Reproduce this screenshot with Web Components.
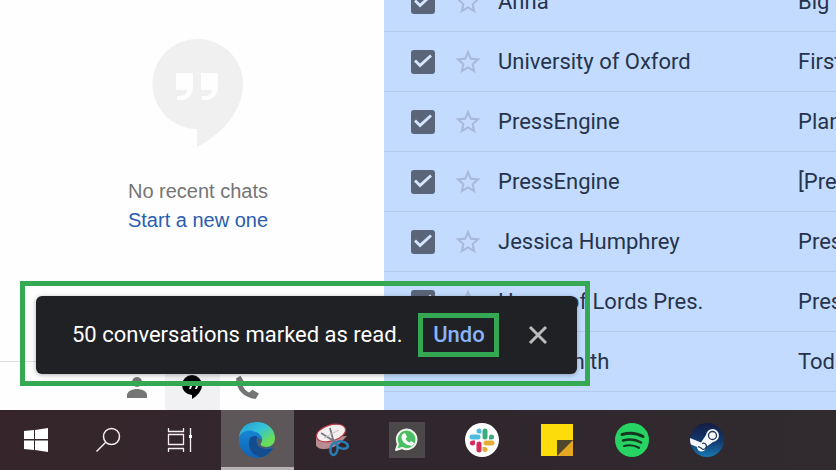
<!DOCTYPE html>
<html lang="en">
<head>
<meta charset="utf-8">
<title>Mail</title>
<style>
    body {
        margin: 0;
        font-family: Roboto, "Liberation Sans", sans-serif;
    }
</style>
</head>
<body>
<desktop-shell>
    <chat-sidebar slot="side"></chat-sidebar>
    <mail-list slot="mail">
        <mail-row sender="Anna">Big n</mail-row>
        <mail-row sender="University of Oxford">First</mail-row>
        <mail-row sender="PressEngine">Plan</mail-row>
        <mail-row sender="PressEngine">[Pres</mail-row>
        <mail-row sender="Jessica Humphrey">Press</mail-row>
        <mail-row sender="House of Lords Pres.">Press</mail-row>
        <mail-row sender="John Smith">Today</mail-row>
    </mail-list>
    <snack-bar slot="toast">50 conversations marked as read.</snack-bar>
    <task-bar slot="taskbar"></task-bar>
</desktop-shell>

<script>
class DesktopShell extends HTMLElement {
    connectedCallback() {
        this.attachShadow({ mode: 'open' });
        this.shadowRoot.innerHTML = `
            <style>
                :host {
                    display: flex;
                    flex-direction: column;
                    height: 100vh;
                    overflow: hidden;
                }
                main {
                    flex: 1;
                    min-height: 0;
                    display: grid;
                    grid-template-columns: 384px 1fr;
                    grid-template-rows: 100%;
                    position: relative;
                    overflow: hidden;
                    background: #fff;
                }
            </style>
            <main>
                <slot name="side"></slot>
                <slot name="mail"></slot>
                <slot name="toast"></slot>
            </main>
            <slot name="taskbar"></slot>
        `;
    }
}

class ChatSidebar extends HTMLElement {
    connectedCallback() {
        this.attachShadow({ mode: 'open' });
        this.shadowRoot.innerHTML = `
            <style>
                :host {
                    display: flex;
                    flex-direction: column;
                    background: #fefefe;
                    font-family: "Liberation Sans", Arial, sans-serif;
                }
                .empty {
                    flex: 1;
                    display: flex;
                    flex-direction: column;
                    align-items: center;
                    padding: 38px 0 0 12px;
                    font-size: 20px;
                    line-height: 29px;
                    color: #757575;
                }
                .empty svg {
                    width: 92px;
                    height: 110px;
                    margin-bottom: 29px;
                }
                p {
                    margin: 0;
                }
                a {
                    color: #2a5db0;
                    text-decoration: none;
                }
                nav {
                    display: flex;
                    justify-content: center;
                    height: 48px;
                    border-top: 1px solid #e0e0e0;
                }
                button {
                    width: 55px;
                    border: 0;
                    padding: 2px 0 0;
                    background: none;
                    color: #757575;
                }
                button.active {
                    background: #f1f1f3;
                    color: #000;
                }
                button svg {
                    display: block;
                    width: 26px;
                    height: 26px;
                    margin: 0 auto;
                }
            </style>
            <div class="empty">
                <svg viewBox="0 0 92 110" fill="#f0f0f0">
                    <path fill-rule="evenodd" d="M46 1a45 45 0 0 1 45 45c0 26-20 50-46 63V91A45 45 0 0 1 46 1zM24 35v17h11c0 4-3 6-10 6v4c10 1 16-4 16-14V35zM49 35v17h11c0 4-3 6-10 6v4c10 1 16-4 16-14V35z"/>
                </svg>
                <p>No recent chats</p>
                <a href="#">Start a new one</a>
            </div>
            <nav>
                <button aria-label="Contacts">
                    <svg viewBox="0 0 26 26" fill="currentColor"><circle cx="13" cy="8" r="5"/><path d="M3 24v-3c0-4 6-6 10-6s10 2 10 6v3z"/></svg>
                </button>
                <button class="active" aria-label="Conversations">
                    <svg viewBox="0 0 26 26" fill="currentColor"><path fill-rule="evenodd" d="M13 1a10 10 0 0 1 10 10c0 6-5 11-10 14v-4A10 10 0 0 1 13 1zM8 8v4h3l-1 3h2l1-3V8zM14 8v4h3l-1 3h2l1-3V8z"/></svg>
                </button>
                <button aria-label="Phone">
                    <svg viewBox="0 0 24 24" fill="currentColor"><path d="M6 1.500 2 4c0 11 7 18 18 19l3-5-6-3.500-3 2.500c-3-1.500-5-4-6-6.500l1.500-3z"/></svg>
                </button>
            </nav>
        `;
    }
}

class MailList extends HTMLElement {
    connectedCallback() {
        this.attachShadow({ mode: 'open' });
        // The list is scrolled part of the way through its first row
        this.shadowRoot.innerHTML = `
            <style>
                :host {
                    display: block;
                    overflow: hidden;
                    background: #c2dbff;
                }
                .rows {
                    margin-top: -28px;
                }
            </style>
            <div class="rows"><slot></slot></div>
        `;
    }
}

class MailRow extends HTMLElement {
    connectedCallback() {
        const sender = this.getAttribute('sender');
        this.attachShadow({ mode: 'open' });
        this.shadowRoot.innerHTML = `
            <style>
                :host {
                    display: grid;
                    grid-template-columns: 42px 45px 300px 1fr;
                    align-items: center;
                    box-sizing: border-box;
                    height: 60px;
                    padding-left: 27px;
                    border-bottom: 1px solid #b3caee;
                    font-size: 22px;
                    line-height: 28px;
                    color: #26334b;
                    white-space: nowrap;
                }
                input {
                    appearance: none;
                    width: 24px;
                    height: 24px;
                    margin: 0;
                    border-radius: 3px;
                    background: #5a6579;
                }
                input:checked::before {
                    content: "";
                    display: block;
                    width: 24px;
                    height: 24px;
                    background: #d5e5ff;
                    clip-path: polygon(3px 12px, 5px 10px, 9px 14px, 19px 5px, 21px 7px, 9px 18px);
                }
                button {
                    width: 30px;
                    height: 30px;
                    padding: 0;
                    border: 0;
                    background: none;
                }
                svg {
                    display: block;
                    width: 30px;
                    height: 30px;
                }
                .subject {
                    min-width: 0;
                    overflow: hidden;
                }
            </style>
            <input type="checkbox" checked aria-label="Select ${sender}">
            <button aria-label="Star">
                <svg viewBox="0 0 24 24" fill="#a9b9dc"><path d="M22 9.240l-7.190-.620L12 2 9.190 8.630 2 9.240l5.460 4.730L5.820 21 12 17.270 18.180 21l-1.630-7.030L22 9.240zM12 15.400l-3.760 2.270 1-4.280-3.320-2.880 4.380-.380L12 6.100l1.710 4.040 4.380.380-3.320 2.880 1 4.280L12 15.400z"/></svg>
            </button>
            <span>${sender}</span>
            <span class="subject"><slot></slot></span>
        `;
    }
}

class SnackBar extends HTMLElement {
    connectedCallback() {
        this.attachShadow({ mode: 'open' });
        this.shadowRoot.innerHTML = `
            <style>
                :host {
                    position: absolute;
                    left: 20px;
                    bottom: 24px;
                    padding: 10px 8px 7px 11px;
                    border: 5px solid #34a853;
                }
                .bar {
                    display: flex;
                    align-items: center;
                    box-sizing: border-box;
                    height: 78px;
                    padding: 0 24px 0 36px;
                    border-radius: 6px;
                    background: #202124;
                    box-shadow: 0 1px 5px rgba(60, 64, 67, 0.4);
                    color: #fff;
                    font-size: 22px;
                    line-height: 28px;
                    white-space: nowrap;
                }
                button {
                    border: 0;
                    padding: 0;
                    background: none;
                    font: inherit;
                }
                .undo {
                    box-sizing: border-box;
                    width: 81px;
                    height: 44px;
                    margin: 0 24px 0 16px;
                    border: 5px solid #34a853;
                    color: #8ab4f8;
                    font-weight: 500;
                }
                svg {
                    display: block;
                    width: 30px;
                    height: 30px;
                }
            </style>
            <div class="bar" role="status">
                <span><slot></slot></span>
                <button class="undo">Undo</button>
                <button aria-label="Close">
                    <svg viewBox="0 0 30 30" fill="none" stroke="#bdbdbd" stroke-width="3"><path d="M7 7l16 16M23 7L7 23"/></svg>
                </button>
            </div>
        `;
    }
}

class TaskItem extends HTMLElement {
    connectedCallback() {
        this.attachShadow({ mode: 'open' });
        this.shadowRoot.innerHTML = `
            <style>
                :host {
                    display: block;
                    width: 73px;
                }
                :host([system]) {
                    width: 72px;
                }
                button {
                    display: flex;
                    align-items: center;
                    justify-content: center;
                    box-sizing: border-box;
                    width: 100%;
                    height: 100%;
                    padding: 0 1px 0 0;
                    border: 0;
                    background: none;
                }
                :host([system]) button {
                    padding: 0;
                }
                :host([active]) button {
                    background: #5e575a;
                    box-shadow: inset 0 -3px #b8b1b4;
                }
                ::slotted(svg) {
                    display: block;
                    width: 40px;
                    height: 40px;
                }
            </style>
            <button aria-label="${this.getAttribute('name')}"><slot></slot></button>
        `;
    }
}

class TaskBar extends HTMLElement {
    connectedCallback() {
        this.attachShadow({ mode: 'open' });
        this.shadowRoot.innerHTML = `
            <style>
                :host {
                    display: flex;
                    height: 60px;
                    background: linear-gradient(90deg, #36262b, #30262d 50%, #302b2f);
                }
                .system, .apps {
                    display: flex;
                }
                .apps {
                    gap: 2px;
                    margin-left: 5px;
                }
            </style>
            <div class="system">
                <task-item system name="Start">
                    <svg viewBox="0 0 40 40" fill="#fff"><path d="M8 11l10-1v9H8zM19 10l13-2v11H19zM8 20.500h10V30L8 29zM19 20.500h13V32l-13-2z"/></svg>
                </task-item>
                <task-item system name="Search">
                    <svg viewBox="0 0 40 40" fill="none" stroke="#f4f0f1" stroke-width="1.500"><circle cx="23.500" cy="16.500" r="8"/><path d="M17.500 22.500L8.500 31.500"/></svg>
                </task-item>
                <task-item system name="Task View">
                    <svg viewBox="0 0 40 40" fill="none" stroke="#f4f0f1" stroke-width="1.300"><path d="M8.500 14.500h15v10h-15zM8.500 8v3.500h15V8M8.500 32v-3.500h15V32M30.500 8v24"/><path d="M29 15h3v3h-3z" fill="#fff" stroke="none"/></svg>
                </task-item>
            </div>
            <div class="apps">
                <task-item active name="Edge">
                    <svg viewBox="0 0 40 40">
                        <defs>
                            <linearGradient id="top" x1="0" y1="0" x2="1" y2="1"><stop offset="0" stop-color="#249bdc"/><stop offset=".45" stop-color="#35c3d5"/><stop offset=".8" stop-color="#6bdc58"/></linearGradient>
                            <linearGradient id="low" x1="0" y1="0" x2="0" y2="1"><stop offset="0" stop-color="#1689d8"/><stop offset="1" stop-color="#1063b4"/></linearGradient>
                        </defs>
                        <path d="M2 17c-2 11 7 21 18 21 7 0 13-4 16-10L22 12 10 8z" fill="url(#low)"/>
                        <path d="M2 17C3 8 10 2 20 2c10 0 18 7 18 16 0 6-4 9-9 9-6 0-7-2-5-4 3-4 0-9-5-11C12 8.500 5 11 2 17z" fill="url(#top)"/>
                        <path d="M13 18c-3 8 1 18 11 19 6-1 10-5 12-9-5 2-12 1-15-3-2-3-2-6 0-8-3-2-6-1-8 1z" fill="#144c90"/>
                        <path d="M20 18c-1 4 0 8 5 10 4 1 9 1 11-1l1-2c-3 2.500-9 2.500-12 1-2-1-2-2-1-3 1-2 0-5-4-5z" fill="#4c5b67"/>
                    </svg>
                </task-item>
                <task-item name="Snip">
                    <svg viewBox="0 0 40 40">
                        <path d="M4 17v8c1 5 13 6 23-1l8-8z" fill="#b78d91"/>
                        <ellipse cx="19" cy="13" rx="15" ry="8" transform="rotate(-17 19 13)" fill="#f6eff0" stroke="#b73945" stroke-width="1.200"/>
                        <path d="M9 13l16 10M18 8l4 15" stroke="#707b84" stroke-width="1.800"/>
                        <path d="M12 18l15-8" stroke="#c8bec2"/>
                        <g fill="none" stroke="#2c7db3" stroke-width="2.500"><ellipse cx="22" cy="29" rx="3.500" ry="6" transform="rotate(10 22 29)"/><ellipse cx="30" cy="25" rx="6" ry="3.500" transform="rotate(15 30 25)"/></g>
                    </svg>
                </task-item>
                <task-item name="WhatsApp">
                    <svg viewBox="0 0 40 40">
                        <path d="M2 2h36v36H2z" fill="#4c4748"/>
                        <path d="M9 30l2-6a9.800 9.800 0 1 1 4 4z" fill="#4bbf63" stroke="#f0f4ef" stroke-width="2" stroke-linejoin="round"/>
                        <path d="M16 14l2-1 2 4-1.500 2c1 2 2.500 3 4 3.500l1.500-1.500 3 2c0 2-2 3-4 2.500-5-1-8-4-8.500-8 0-1 .5-3 1.500-3.500z" fill="#fff"/>
                    </svg>
                </task-item>
                <task-item name="Slack">
                    <svg viewBox="0 0 40 40" fill="none" stroke-width="5" stroke-linecap="round">
                        <circle cx="20" cy="20" r="17" fill="#fff"/>
                        <path d="M10 17h6" stroke="#4bbbe0"/><path d="M23 11v6" stroke="#3aac7d"/><path d="M24 23h6" stroke="#e5ae3b"/><path d="M17 24v6" stroke="#d42b5b"/>
                        <g stroke="none"><path d="M17 8.500a2.500 2.500 0 0 0 0 5h2.500V11A2.500 2.500 0 0 0 17 8.500z" fill="#4bbbe0"/><path d="M32 17a2.500 2.500 0 0 0-5 0v2.500h2.500A2.500 2.500 0 0 0 32 17z" fill="#3aac7d"/><path d="M23 32a2.500 2.500 0 0 0 0-5h-2.500v2.500A2.500 2.500 0 0 0 23 32z" fill="#e5ae3b"/><path d="M8 23a2.500 2.500 0 0 0 5 0v-2.500h-2.500A2.500 2.500 0 0 0 8 23z" fill="#d42b5b"/></g>
                    </svg>
                </task-item>
                <task-item name="Sticky Notes">
                    <svg viewBox="0 0 40 40"><path d="M4 4h32v16l-16 16H4z" fill="#fcdc0b"/><path d="M36 20v16H20z" fill="#e5a622"/><path d="M20 20h16L20 36z" fill="#50472d"/></svg>
                </task-item>
                <task-item name="Spotify">
                    <svg viewBox="0 0 40 40" fill="none" stroke="#16371f" stroke-linecap="round">
                        <circle cx="20" cy="20" r="17" fill="#27d362" stroke="none"/>
                        <path d="M10 14.500c7-2 15-1.500 21 2" stroke-width="3"/><path d="M11 20.500c6-1.700 13-1 18 2" stroke-width="2.600"/><path d="M12 26c5-1.300 10.500-.8 15 1.800" stroke-width="2.200"/>
                    </svg>
                </task-item>
                <task-item name="Steam">
                    <svg viewBox="0 0 40 40">
                        <defs><linearGradient id="steam" x1="0" y1="0" x2="0" y2="1"><stop offset="0" stop-color="#151c46"/><stop offset=".55" stop-color="#113a6d"/><stop offset="1" stop-color="#1979b3"/></linearGradient></defs>
                        <circle cx="20" cy="20" r="17" fill="url(#steam)"/>
                        <path d="M3 18l11 4.500 5-7.500a6.500 6.500 0 1 1 7 7l-7 5a4.500 4.500 0 0 1-9 0l-6-2.500c-1-2-1-4-1-6.500z" fill="#f5f7fa"/>
                        <circle cx="25.500" cy="15.500" r="4" fill="#f5f7fa" stroke="#22375b" stroke-width="1.300"/>
                        <path d="M11 26.500l3 1.500a3 3 0 1 0 1-4.500" fill="none" stroke="#22375b" stroke-width="1.200"/>
                    </svg>
                </task-item>
            </div>
        `;
    }
}

customElements.define('desktop-shell', DesktopShell);
customElements.define('chat-sidebar', ChatSidebar);
customElements.define('mail-list', MailList);
customElements.define('mail-row', MailRow);
customElements.define('snack-bar', SnackBar);
customElements.define('task-item', TaskItem);
customElements.define('task-bar', TaskBar);
</script>
</body>
</html>
